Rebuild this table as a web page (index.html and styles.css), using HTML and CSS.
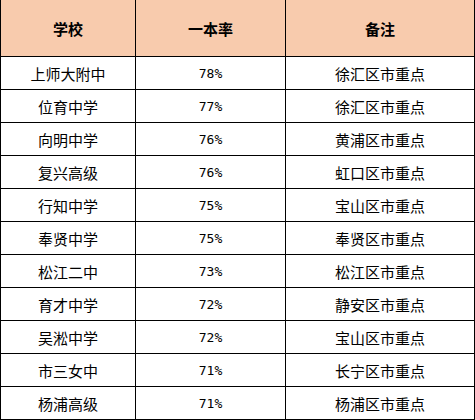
FILE: index.html
```html
<!DOCTYPE html>
<html lang="zh">
<head>
<meta charset="utf-8">
<link rel="stylesheet" href="styles.css">
</head>
<body>
<table class="rank">
  <colgroup>
    <col class="c1"><col class="c2"><col class="c3">
  </colgroup>
  <thead>
    <tr><th>学校</th><th>一本率</th><th>备注</th></tr>
  </thead>
  <tbody>
    <tr><td>上师大附中</td><td class="num">78%</td><td>徐汇区市重点</td></tr>
    <tr><td>位育中学</td><td class="num">77%</td><td>徐汇区市重点</td></tr>
    <tr><td>向明中学</td><td class="num">76%</td><td>黄浦区市重点</td></tr>
    <tr><td>复兴高级</td><td class="num">76%</td><td>虹口区市重点</td></tr>
    <tr><td>行知中学</td><td class="num">75%</td><td>宝山区市重点</td></tr>
    <tr><td>奉贤中学</td><td class="num">75%</td><td>奉贤区市重点</td></tr>
    <tr><td>松江二中</td><td class="num">73%</td><td>松江区市重点</td></tr>
    <tr><td>育才中学</td><td class="num">72%</td><td>静安区市重点</td></tr>
    <tr><td>吴淞中学</td><td class="num">72%</td><td>宝山区市重点</td></tr>
    <tr><td>市三女中</td><td class="num">71%</td><td>长宁区市重点</td></tr>
    <tr><td>杨浦高级</td><td class="num">71%</td><td>杨浦区市重点</td></tr>
  </tbody>
</table>
</body>
</html>
```
FILE: styles.css
```css
html, body {
  margin: 0;
  padding: 0;
  background: #ffffff;
}
.rank {
  border-collapse: separate;
  border-spacing: 0;
  width: 475px;
  table-layout: fixed;
  font-family: "Noto Sans CJK SC", "Noto Sans", sans-serif;
  font-size: 15px;
  color: #000;
}
.c1 { width: 136px; }
.c2 { width: 150px; }
.c3 { width: 189px; }
.rank th, .rank td {
  padding: 0;
  text-align: center;
  border-right: 1px solid #000;
  border-bottom: 1px solid #000;
  line-height: 1;
}
.rank th:first-child, .rank td:first-child {
  border-left: 1px solid #000;
}
.rank th {
  background: #f8cbad;
  height: 56px;
  font-weight: bold;
}
.rank td {
  height: 32px;
  font-weight: normal;
}
.rank td.num {
  font-family: "DejaVu Sans Mono", "Liberation Mono", monospace;
  font-size: 13px;
}
```
